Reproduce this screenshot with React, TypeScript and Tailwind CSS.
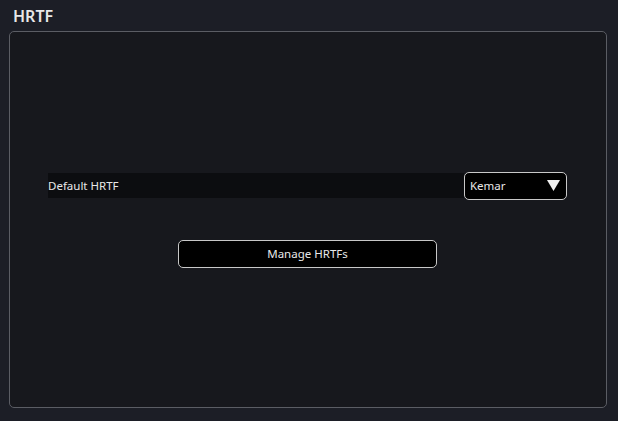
export default function App() {
  return (
    <div
      className="w-[618px] h-[421px] bg-[#1c1e26] flex flex-col text-[#e8e8e8]"
      style={{ fontFamily: '"Noto Sans", "Open Sans", sans-serif' }}
    >
      <div className="h-[31px] pl-[13px] pt-[6px] text-[16px] leading-[20px] font-semibold">HRTF</div>
      <div className="ml-[9px] w-[598px] h-[377px] rounded-[5px] border border-[#5b5d64] bg-[#17181d] flex flex-col items-center justify-center gap-[40px]">
        <div className="w-[519px] -ml-[1px] flex items-center justify-between">
          <div className="flex-1 h-[25px] bg-[#0c0d10] flex items-center text-[11.5px]">Default HRTF</div>
          <div className="w-[103px] h-[28px] bg-black border border-[#c8c8c8] rounded-[5px] flex items-center justify-between pl-[5px] pr-[6px] text-[11.5px]">
            <span>Kemar</span>
            <svg width="13" height="11" viewBox="0 0 13 11">
              <polygon points="0,0 13,0 6.5,11" fill="#f0f0f0" />
            </svg>
          </div>
        </div>
        <button className="w-[259px] h-[28px] -ml-[1px] bg-black border border-[#c8c8c8] rounded-[5px] text-[11.5px] text-[#e8e8e8]">
          Manage HRTFs
        </button>
      </div>
    </div>
  );
}
